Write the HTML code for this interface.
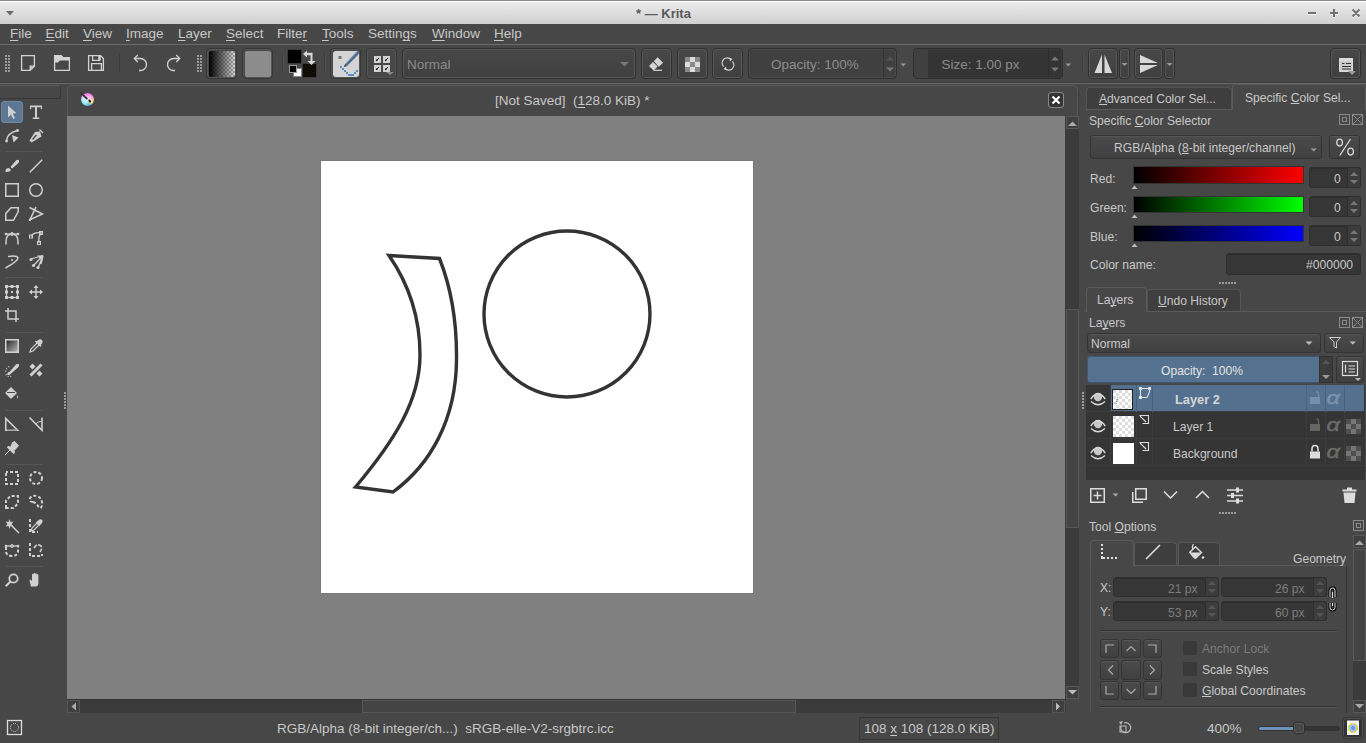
<!DOCTYPE html>
<html><head><meta charset="utf-8"><style>
html,body{margin:0;padding:0}
body{width:1366px;height:743px;overflow:hidden;background:#474747;font-family:"Liberation Sans",sans-serif;font-size:13.5px;color:#c8c8c8;position:relative}
.a{position:absolute}
.t{position:absolute;white-space:pre;line-height:1}
.u{text-decoration:underline;text-underline-offset:2px;text-decoration-skip-ink:none}
svg{position:absolute;overflow:visible}
.tb{position:absolute;box-sizing:border-box;border:1px solid #363636;border-radius:4px;background:#474747;box-shadow:inset 0 0 0 1px #555}
.bt{position:absolute;box-sizing:border-box;border:1px solid #303030;border-radius:4px;background:linear-gradient(#484848,#3f3f3f);box-shadow:inset 0 0 0 1px #575757}
.sep{position:absolute;width:1px;background:#3c3c3c;box-shadow:1px 0 0 #505050}
</style></head><body>
<style>
.d{font-size:12.1px}
.d .u{text-underline-offset:1px}
.tab{position:absolute;box-sizing:border-box;border:1px solid #555;border-bottom:none;border-radius:4px 4px 0 0;background:#3e3e3e}
.taba{position:absolute;box-sizing:border-box;border:1px solid #5a5a5a;border-bottom:none;border-radius:4px 4px 0 0;background:#474747}
.fld{position:absolute;box-sizing:border-box;border:1px solid #2e2e2e;border-radius:3px;background:#363636;box-shadow:inset 0 1px 0 #2c2c2c}
.cb{position:absolute;box-sizing:border-box;border:1px solid #333;border-radius:3px;background:linear-gradient(#4a4a4a,#404040);box-shadow:inset 0 1px 0 #555}
</style>
<!-- TITLE BAR -->
<div class="a" style="left:0;top:0;width:1366px;height:24px;background:linear-gradient(#ececec,#d0d0d0);box-sizing:border-box;border-top:1px solid #8a8a8a"></div>
<div class="a" style="left:0;top:1px;width:1366px;height:1px;background:#fafafa"></div>
<svg style="left:6px;top:11px" width="9" height="6"><path d="M0 0H8L4 4.5Z" fill="#6a6a6a"/></svg>
<div class="t" style="left:636px;top:7px;font-size:13px;font-weight:bold;color:#5a5a5a">* — Krita</div>
<svg style="left:0;top:0" width="1366" height="24">
 <g stroke="#fff" stroke-width="2" opacity="0.8" transform="translate(0,1)"><path d="M1308 13H1316M1330 13H1338M1334 9V17M1352.5 9.5L1359.5 16.5M1359.5 9.5L1352.5 16.5"/></g>
 <g stroke="#707070" stroke-width="2"><path d="M1308 13H1316M1330 13H1338M1334 9V17M1352.5 9.5L1359.5 16.5M1359.5 9.5L1352.5 16.5"/></g>
</svg>
<!-- MENU BAR -->
<div class="a" style="left:0;top:44px;width:1366px;height:1px;background:#6c6c6c"></div>
<div class="t" style="left:10px;top:27px"><span class=u>F</span>ile</div>
<div class="t" style="left:45.5px;top:27px"><span class=u>E</span>dit</div>
<div class="t" style="left:83px;top:27px"><span class=u>V</span>iew</div>
<div class="t" style="left:126px;top:27px"><span class=u>I</span>mage</div>
<div class="t" style="left:178px;top:27px"><span class=u>L</span>ayer</div>
<div class="t" style="left:226px;top:27px"><span class=u>S</span>elect</div>
<div class="t" style="left:277px;top:27px">Filte<span class=u>r</span></div>
<div class="t" style="left:322px;top:27px"><span class=u>T</span>ools</div>
<div class="t" style="left:368px;top:27px">Settin<span class=u>g</span>s</div>
<div class="t" style="left:432px;top:27px"><span class=u>W</span>indow</div>
<div class="t" style="left:494px;top:27px"><span class=u>H</span>elp</div>

<!-- TOOLBAR -->
<div class="a" style="left:0;top:82px;width:1366px;height:1px;background:#3d3d3d"></div>
<div class="a" style="left:0;top:83px;width:1366px;height:1px;background:#6a6a6a"></div>
<!-- buttons frames -->
<div class="tb" style="left:206px;top:48px;width:31px;height:31px"></div>
<div class="a" style="left:209px;top:51px;width:26px;height:26px;border-radius:2px;background:linear-gradient(90deg,#000 0%,rgba(0,0,0,0) 100%),repeating-conic-gradient(#d8d8d8 0 25%,#9a9a9a 0 50%) 0 0/4px 4px"></div>
<div class="tb" style="left:242px;top:48px;width:31px;height:31px"></div>
<div class="a" style="left:245px;top:51px;width:26px;height:26px;border-radius:2px;background:#8c8c8c"></div>
<div class="sep" style="left:282px;top:54px;height:19px"></div>
<div class="a" style="left:288px;top:50px;width:13px;height:13px;background:#000;box-shadow:0 0 0 1px #3a3a3a"></div>
<div class="a" style="left:303px;top:64px;width:13px;height:13px;background:#0e0c05;box-shadow:0 0 0 1px #3a3a3a"></div>
<div class="a" style="left:294px;top:69px;width:7px;height:7px;background:#fff;box-shadow:0 0 0 1px #888"></div>
<div class="a" style="left:290px;top:66px;width:6px;height:6px;background:#000;box-shadow:0 0 0 1px #999"></div>
<div class="sep" style="left:324px;top:54px;height:19px"></div>
<div class="tb" style="left:330px;top:48px;width:31px;height:31px"></div>
<div class="a" style="left:333px;top:51px;width:26px;height:26px;border-radius:3px;background:#d4d4d4"></div>
<div class="tb" style="left:366px;top:48px;width:31px;height:31px"></div>
<!-- blend mode combo -->
<div class="bt" style="left:402px;top:48px;width:234px;height:31px;border-radius:4px"></div>
<div class="t" style="left:407px;top:57.5px;color:#8a8a8a;font-size:13.5px">Normal</div>
<svg style="left:620px;top:62px" width="10" height="6"><path d="M0 0H9L4.5 4.5Z" fill="#777"/></svg>
<div class="bt" style="left:641px;top:48px;width:31px;height:31px;border-radius:4px"></div>
<div class="bt" style="left:677px;top:48px;width:31px;height:31px;border-radius:4px"></div>
<div class="bt" style="left:712px;top:48px;width:31px;height:31px;border-radius:4px"></div>
<!-- opacity slider -->
<div class="a" style="left:748px;top:48px;width:149px;height:31px;box-sizing:border-box;border:1px solid #2f2f2f;border-radius:4px;background:#404040;box-shadow:inset 0 0 0 1px #4a4a4a"></div>
<div class="a" style="left:883px;top:49px;width:1px;height:29px;background:#333"></div>
<div class="t" style="left:771px;top:57.5px;color:#8c8c8c;font-size:13.5px">Opacity: 100%</div>
<svg style="left:0;top:0" width="1366" height="90">
 <path d="M886 60.5L890 56.5L894 60.5Z" fill="#555"/><path d="M886 67.5L890 71.5L894 67.5Z" fill="#777"/>
 <path d="M900.5 63.5H906L903.25 66.5Z" fill="#999"/>
</svg>
<!-- size slider -->
<div class="a" style="left:913px;top:48px;width:150px;height:31px;box-sizing:border-box;border:1px solid #2f2f2f;border-radius:4px;background:#343434;box-shadow:inset 0 0 0 1px #3a3a3a"></div>
<div class="a" style="left:914px;top:49px;width:14px;height:29px;background:#404040;border-radius:3px 0 0 3px"></div>
<div class="a" style="left:1048px;top:49px;width:1px;height:29px;background:#2c2c2c"></div>
<div class="t" style="left:941.5px;top:57.5px;color:#8c8c8c;font-size:13.5px">Size: 1.00 px</div>
<svg style="left:0;top:0" width="1366" height="90">
 <path d="M1051 60.5L1055 56.5L1059 60.5Z" fill="#777"/><path d="M1051 67.5L1055 71.5L1059 67.5Z" fill="#777"/>
 <path d="M1065.5 63.5H1071L1068.25 66.5Z" fill="#999"/>
</svg>
<div class="sep" style="left:1082px;top:54px;height:19px"></div>
<div class="bt" style="left:1088px;top:48px;width:30px;height:31px;border-radius:4px"></div>
<div class="bt" style="left:1119px;top:48px;width:11px;height:31px;border-radius:3px"></div>
<div class="bt" style="left:1134px;top:48px;width:29px;height:31px;border-radius:4px"></div>
<div class="bt" style="left:1164px;top:48px;width:11px;height:31px;border-radius:3px"></div>
<div class="bt" style="left:1330px;top:48px;width:31px;height:31px;border-radius:4px"></div>

<svg style="left:0;top:0" width="1366" height="90">
<g fill="#9a9a9a">
 <rect x="5" y="55" width="2" height="2"/><rect x="8" y="55" width="2" height="2"/>
 <rect x="5" y="58" width="2" height="2"/><rect x="8" y="58" width="2" height="2"/>
 <rect x="5" y="61" width="2" height="2"/><rect x="8" y="61" width="2" height="2"/>
 <rect x="5" y="64" width="2" height="2"/><rect x="8" y="64" width="2" height="2"/>
 <rect x="5" y="67" width="2" height="2"/><rect x="8" y="67" width="2" height="2"/>
 <rect x="5" y="70" width="2" height="2"/><rect x="8" y="70" width="2" height="2"/>
 <rect x="197" y="55" width="2" height="2"/><rect x="200" y="55" width="2" height="2"/>
 <rect x="197" y="58" width="2" height="2"/><rect x="200" y="58" width="2" height="2"/>
 <rect x="197" y="61" width="2" height="2"/><rect x="200" y="61" width="2" height="2"/>
 <rect x="197" y="64" width="2" height="2"/><rect x="200" y="64" width="2" height="2"/>
 <rect x="197" y="67" width="2" height="2"/><rect x="200" y="67" width="2" height="2"/>
 <rect x="197" y="70" width="2" height="2"/><rect x="200" y="70" width="2" height="2"/>
</g>
<g fill="none" stroke="#d2d2d2" stroke-width="1.3">
 <!-- new -->
 <path d="M21.6 55.6H34.4V66.2L30.2 70.4H21.6Z"/>
 <path d="M30.2 70.4V66.2H34.4" fill="#bdbdbd"/>
 <!-- open -->
 <path d="M54.6 55.6H61L63 57.6H69.4V70.4H54.6Z"/>
 <!-- save -->
 <path d="M88.6 55.6H100.6L103.4 58.6V70.4H88.6Z"/>
 <path d="M92.6 55.6V60.4H99.4V55.6"/>
 <path d="M91.6 70.4V63.6H101.4V70.4"/>
 <!-- undo / redo -->
 <path d="M134.5 58.5H140.5A5.6 5.6 0 0 1 140.5 70.5H139"/>
 <path d="M137.8 55L134.3 58.5L137.8 62"/>
 <path d="M179.5 58.5H173.5A5.6 5.6 0 0 0 173.5 70.5H175"/>
 <path d="M176.2 55L179.7 58.5L176.2 62"/>
</g>
<path d="M54 55H61L63 57H70V60.5H60L58 62.5H54Z" fill="#d2d2d2"/>
<path d="M99.5 55.6V60.4" stroke="#d2d2d2" stroke-width="2.5"/>
<!-- separator -->
<rect x="119" y="54" width="1" height="19" fill="#3c3c3c"/>
<!-- swap arrows -->
<g fill="#d8d8d8">
 <path d="M303 54L307 50.5V52.8H312.5V61H315.5L311.5 65L307.5 61H310.5V55.2H307V57.5Z"/>
</g>
<!-- brush preset icon -->
<rect x="338.5" y="56" width="3" height="3" fill="#777"/>
<path d="M344.8 64.5L355.5 52.8Q357.8 50.5 358.9 51.5Q359.9 52.6 357.9 55L346.8 66.2Z" fill="#4a6a90"/>
<path d="M345.8 63.8L356.8 52.3" stroke="#8aa8c8" stroke-width="0.8"/>
<path d="M344 67L344.8 64.5L346.8 66.2Z" fill="#333"/>
<g fill="#5a90c8">
 <rect x="340" y="66" width="2" height="2"/><rect x="342" y="68" width="2" height="2"/><rect x="344" y="70" width="2" height="2"/><rect x="346" y="72" width="2" height="2"/>
 <rect x="348" y="74" width="6" height="2"/><rect x="354" y="72" width="2" height="2"/><rect x="356" y="70" width="2" height="2"/>
</g>
<!-- grid icon -->
<g fill="#d0d0d0">
 <rect x="374" y="56" width="7" height="7"/><rect x="383" y="56" width="7" height="7"/>
 <rect x="374" y="65" width="7" height="7"/><rect x="383" y="65" width="7" height="7"/>
</g>
<g fill="#111"><path d="M376 61V59L378 61Z"/><path d="M376.8 60.2L379 58" stroke="#111" stroke-width="1"/><path d="M385 61V59L387 61Z"/><path d="M385.8 60.2L388 58" stroke="#111" stroke-width="1"/><path d="M376 70V68L378 70Z"/><path d="M376.8 69.2L379 67" stroke="#111" stroke-width="1"/><path d="M385 70V68L387 70Z"/><path d="M385.8 69.2L388 67" stroke="#111" stroke-width="1"/></g>
<path d="M386 72H394L390 75Z" fill="#888"/>
<!-- eraser -->
<path d="M653.8 61.2L657.6 57.3L663 62.7L658.8 66.8Z" fill="#d4d4d4"/>
<path d="M649 66L653 62L657.6 66.6L653.6 70.4Z" fill="#d4d4d4"/>
<path d="M653.5 70.3H662" stroke="#d4d4d4" stroke-width="1.2"/>
<!-- alpha lock checker -->
<rect x="685" y="57" width="15" height="15" fill="#dcdcdc"/>
<g fill="#8a8a8a"><rect x="685" y="57" width="5" height="5"/><rect x="695" y="57" width="5" height="5"/><rect x="690" y="62" width="5" height="5"/><rect x="685" y="67" width="5" height="5"/><rect x="695" y="67" width="5" height="5"/></g>
<!-- reload -->
<g fill="none" stroke="#cfcfcf" stroke-width="1.1">
 <path d="M723.5 66.5A4.8 4.8 0 0 1 731 59.5"/>
 <path d="M732.5 61.5A4.8 4.8 0 0 1 725 68.5"/>
</g>
<path d="M729.5 57.5L732.5 59L730 61.5Z M726.5 70.5L723.5 69L726 66.5Z" fill="#cfcfcf"/>
<!-- mirror H -->
<path d="M1102 54.5V73H1094.5Z M1104.5 54.5V73H1112Z" fill="#d8d8d8"/>
<path d="M1121.5 63H1127.5L1124.5 66Z" fill="#999"/>
<!-- mirror V -->
<path d="M1140 55L1158 63H1140Z M1140 65H1158L1140 73Z" fill="#d8d8d8"/>
<path d="M1166.5 63H1172.5L1169.5 66Z" fill="#999"/>
<!-- right icon -->
<path d="M1339.5 58.5H1352.5V71.5H1339.5Z" fill="#ccc" stroke="#ddd" stroke-width="1"/>
<path d="M1339.5 58.5H1352.5V61H1339.5Z" fill="#ddd"/>
<path d="M1342 63.5H1344.5M1346 63.5H1351M1342 66.5H1351M1342 69H1351" stroke="#333" stroke-width="1.2"/>
<path d="M1348 71H1356L1352 75Z" fill="#999"/>
</svg>

<!-- TOOLBOX -->
<div class="a" style="left:0;top:85px;width:61px;height:14px;box-sizing:border-box;border:1px solid #353535;border-top-color:#5a5a5a;border-left:none;background:#474747"></div>
<div class="a" style="left:1px;top:101px;width:22px;height:22px;box-sizing:border-box;border-radius:3px;background:#5c7894;border:1px solid #6a8aa8"></div>
<svg style="left:0;top:0" width="70" height="600">
<rect x="6" y="151" width="37" height="1" fill="#555"/>
<rect x="6" y="277" width="37" height="1" fill="#555"/>
<rect x="6" y="332" width="37" height="1" fill="#555"/>
<rect x="6" y="410" width="37" height="1" fill="#555"/>
<rect x="6" y="464" width="37" height="1" fill="#555"/>
<rect x="6" y="566" width="37" height="1" fill="#555"/>
<g transform="translate(5,105)"><path d="M3 0.5L11.5 8.2L7.7 8.6L10 13L8.2 14L6 9.6L3 12.5Z" fill="#d0d0d0"/></g>
<g transform="translate(29,105)"><path d="M1 0.5H13V4.2H11.9V2.2H8V12.6H10.3V14H3.7V12.6H6V2.2H2.1V4.2H1Z" fill="#d0d0d0"/></g>
<g transform="translate(5,129)"><path d="M1.5 12Q2 4 12.5 1.5" stroke="#d0d0d0" fill="none" stroke-width="1.5"/><circle cx="1.6" cy="12" r="1.4" fill="#d0d0d0"/><circle cx="12.5" cy="1.5" r="1.4" fill="#d0d0d0"/><path d="M7 6L13.5 8.5L8.5 13.5Z" fill="#d0d0d0"/></g>
<g transform="translate(29,129)"><path d="M0.5 11.5L6 3L11 2.5L12.5 7.5L2.5 13.5Z" fill="#d0d0d0"/><path d="M3.5 10.5L7.5 6" stroke="#474747" stroke-width="1.3"/><path d="M10.5 0.5L14 4" stroke="#d0d0d0" stroke-width="1.2"/></g>
<g transform="translate(5,159)"><path d="M0.5 13Q0 9 4 9L6 11Q5 13.5 0.5 13Z" fill="#d0d0d0"/><path d="M5 8.5L11 1.5Q13 0 14 1.5Q14.5 3 13 4.5L6.5 10Z" fill="#d0d0d0"/><path d="M4.5 7.5L7 10" stroke="#474747" stroke-width="1"/></g>
<g transform="translate(29,159)"><path d="M0.8 13.2L13.2 0.8" stroke="#d0d0d0" fill="none" stroke-width="1.5"/></g>
<g transform="translate(5,183)"><rect x="0.75" y="0.75" width="12.5" height="12.5" stroke="#d0d0d0" fill="none" stroke-width="1.5"/></g>
<g transform="translate(29,183)"><circle cx="7" cy="7" r="6.25" stroke="#d0d0d0" fill="none" stroke-width="1.5"/></g>
<g transform="translate(5,207)"><path d="M0.75 6.5L6 0.75H13.25V4.5L8.5 13.25H0.75Z" stroke="#d0d0d0" fill="none" stroke-width="1.5"/></g>
<g transform="translate(29,207)"><path d="M0.5 0.5L13.5 7L1 12.8L7 0" stroke="#d0d0d0" fill="none" stroke-width="1.5"/><circle cx="1" cy="12.8" r="1.2" fill="#d0d0d0"/></g>
<g transform="translate(5,231)"><path d="M1 13.5V11Q1 3 7 3Q13 3 13 11V13.5" stroke="#d0d0d0" fill="none" stroke-width="1.5"/><path d="M0.5 3H13.5" stroke="#d0d0d0" fill="none" stroke-width="1.2"/><circle cx="1" cy="3" r="1.3" fill="#d0d0d0"/><circle cx="13" cy="3" r="1.3" fill="#d0d0d0"/><circle cx="7" cy="3" r="1.5" stroke="#d0d0d0" fill="none" stroke-width="1"/></g>
<g transform="translate(29,231)"><path d="M2 5.5Q5 0.5 12 2Q9 6 10 12" stroke="#d0d0d0" fill="none" stroke-width="1.3"/><rect x="0.5" y="4" width="3" height="3" stroke="#d0d0d0" fill="none"/><rect x="10.5" y="0.5" width="3" height="3" stroke="#d0d0d0" fill="none"/><rect x="8.5" y="10.5" width="3" height="3" stroke="#d0d0d0" fill="none"/></g>
<g transform="translate(5,255)"><path d="M3 1.5Q12 0 13 3Q13 6 0.5 13" stroke="#d0d0d0" fill="none" stroke-width="1.5"/><circle cx="7" cy="5" r="1" fill="#d0d0d0"/></g>
<g transform="translate(29,255)"><path d="M14 0.5L2 4M14 0.5L5 10M14 0.5L9 13M14 0.5L12 9" stroke="#d0d0d0" fill="none" stroke-width="1.3"/><circle cx="2" cy="4.5" r="1.6" fill="#d0d0d0"/><circle cx="4.5" cy="10.5" r="1.6" fill="#d0d0d0"/><circle cx="9" cy="12.5" r="1.6" fill="#d0d0d0"/><path d="M8 0.5L14 0.5L13.5 6Z" fill="#d0d0d0"/></g>
<g transform="translate(5,285)"><rect x="1.5" y="1.5" width="11" height="11" stroke="#d0d0d0" fill="none" stroke-width="1.2"/><g fill="#d0d0d0"><rect x="0" y="0" width="3" height="3"/><rect x="11" y="0" width="3" height="3"/><rect x="0" y="11" width="3" height="3"/><rect x="11" y="11" width="3" height="3"/><rect x="5.5" y="0" width="3" height="3"/><rect x="5.5" y="11" width="3" height="3"/><rect x="0" y="5.5" width="3" height="3"/><rect x="11" y="5.5" width="3" height="3"/><rect x="6" y="6" width="2" height="2"/></g></g>
<g transform="translate(29,285)"><path d="M7 1V13M1 7H13" stroke="#d0d0d0" fill="none" stroke-width="1.4"/><path d="M7 0L9.5 3H4.5ZM7 14L9.5 11H4.5ZM0 7L3 4.5V9.5ZM14 7L11 4.5V9.5Z" fill="#d0d0d0"/></g>
<g transform="translate(5,308)"><path d="M3 0V11H14M0 3H11V14" stroke="#d0d0d0" fill="none" stroke-width="1.5"/></g>
<g transform="translate(5,339)"><defs><linearGradient id="gg" x1="0" y1="0" x2="1" y2="1"><stop offset="0" stop-color="#222"/><stop offset="1" stop-color="#bbb"/></linearGradient></defs><rect x="0.75" y="0.75" width="12.5" height="12.5" fill="url(#gg)" stroke="#d0d0d0" stroke-width="1.5"/></g>
<g transform="translate(29,339)"><path d="M1 13L2 10L8.5 3.5L10.5 5.5L4 12Z" stroke="#d0d0d0" fill="none" stroke-width="1.2"/><path d="M7 3L9.5 0.8Q11.5 -0.5 13 1Q14.5 2.5 13 4.5L11 7Z" fill="#d0d0d0"/><path d="M6.5 2L12 7.5" stroke="#d0d0d0" fill="none" stroke-width="1.6"/></g>
<g transform="translate(5,363)"><path d="M4 9.5L11 1.5Q13 0 14 1.5Q14.5 3 13 4.5L5.5 11Z" fill="#d0d0d0"/><path d="M2 11.5Q3 7.5 6 10Q5 13 2 11.5Z" fill="#d0d0d0"/><g stroke="#d0d0d0" stroke-width="0.9"><path d="M0 8H1.5M1 5L2.3 6M3.5 3L4 4.5M0.5 12L2 11.5M3 14L3.5 12.8M6 14L5.5 12.8"/></g></g>
<g transform="translate(29,363)"><path d="M11.5 0.5L13.5 2.5L2.5 13.5L0.5 11.5Z" fill="#d0d0d0"/><path d="M3.5 0.5L6.5 3.5L3.5 6.5L0.5 3.5ZM10.5 7.5L13.5 10.5L10.5 13.5L7.5 10.5Z" fill="#d0d0d0"/></g>
<g transform="translate(5,386)"><path d="M0.5 6.5L6 1L12 7L7 12Q6 13 5 12L1 8Q0 7 0.5 6.5Z" fill="#d0d0d0"/><path d="M2 6.5H10" stroke="#474747" stroke-width="1"/><path d="M12.5 9Q14 11.5 12.8 13Q11.5 11.5 12.5 9Z" fill="#d0d0d0"/></g>
<g transform="translate(5,417)"><path d="M0.75 1.5V13.25H12.5Z" stroke="#d0d0d0" fill="none" stroke-width="1.6"/><path d="M3 13.8V12.5M5 13.8V12.5M7 13.8V12.5M9 13.8V12.5M11 13.8V12.5" stroke="#474747" stroke-width="0.7"/></g>
<g transform="translate(29,417)"><path d="M0.5 0.5L13 13.2V0.5" stroke="#d0d0d0" fill="none" stroke-width="1.6"/><path d="M7 7Q8 4.5 12 4.5" stroke="#d0d0d0" fill="none" stroke-width="1"/></g>
<g transform="translate(5,441)"><path d="M7 1.5L9.5 0L14 4.5L12 7L9.5 9.5L10 12L8.5 13L1.8 6.2L3 5L5.5 5.5Z" fill="#d0d0d0"/><path d="M0 14L5 9" stroke="#d0d0d0" fill="none" stroke-width="1"/></g>
<g transform="translate(5,471)"><rect x="1" y="1" width="12" height="12" stroke="#d0d0d0" fill="none" stroke-width="2" stroke-dasharray="3 2" stroke-dashoffset="1"/></g>
<g transform="translate(29,471)"><circle cx="7" cy="7" r="6" stroke="#d0d0d0" fill="none" stroke-width="2" stroke-dasharray="3 2"/></g>
<g transform="translate(5,495)"><path d="M1 13V5.5L5.5 1H13V8.5L8.5 13Z" stroke="#d0d0d0" fill="none" stroke-width="2" stroke-dasharray="3 2"/></g>
<g transform="translate(29,495)"><path d="M4 7Q0 7 1 3Q3 0 8 1Q13 3 13 8Q13 12 11.5 13.5M4 7Q8 8 10 13" stroke="#d0d0d0" fill="none" stroke-width="2" stroke-dasharray="3 2"/></g>
<g transform="translate(5,519)"><path d="M5 5L14 14" stroke="#d0d0d0" fill="none" stroke-width="1.5"/><path d="M4.5 0L5.5 3L8.5 2.5L6.5 5L8.5 7.5L5.5 7L4.5 10L3.5 7L0.5 7.5L2.5 5L0.5 2.5L3.5 3Z" fill="#d0d0d0"/></g>
<g transform="translate(29,519)"><path d="M1 5V13H9M1 3V1H4" stroke="#d0d0d0" fill="none" stroke-width="2" stroke-dasharray="3 2"/><path d="M2 12L3 9L8 4L10 6L5 11Z" stroke="#d0d0d0" fill="none" stroke-width="1.2"/><path d="M7 3.5L10 0.8Q12 -0.2 13.2 1Q14.2 2.2 13 4L10.5 7Z" fill="#d0d0d0"/></g>
<g transform="translate(5,543)"><path d="M1 4V9Q2 13 7 13Q12 13 13 9V4" stroke="#d0d0d0" fill="none" stroke-width="2" stroke-dasharray="3 2"/><path d="M0.5 3H13.5" stroke="#d0d0d0" fill="none" stroke-width="1.3"/><circle cx="1" cy="3" r="1.3" fill="#d0d0d0"/><circle cx="13" cy="3" r="1.3" fill="#d0d0d0"/><circle cx="7" cy="3" r="1.5" stroke="#d0d0d0" fill="none" stroke-width="1"/></g>
<g transform="translate(29,543)"><path d="M1 5V13H13V11M1 3V1H4" stroke="#d0d0d0" fill="none" stroke-width="2" stroke-dasharray="3 2"/><path d="M5 5Q8 0 12 3Q14 6 10 10" stroke="#d0d0d0" fill="none" stroke-width="1.6" stroke-dasharray="4 1.5"/></g>
<g transform="translate(5,573)"><circle cx="8.5" cy="5.5" r="4.2" stroke="#d0d0d0" fill="none" stroke-width="1.8"/><path d="M5.5 8.5L0.7 13.3" stroke="#d0d0d0" fill="none" stroke-width="2"/></g>
<g transform="translate(29,573)"><path d="M2 13.5L0.5 7.5Q0.5 6.5 1.5 6.5L3 8V1.5Q3 0.8 3.8 0.8Q4.6 0.8 4.6 1.5V6V0.7Q4.6 0 5.4 0Q6.2 0 6.2 0.7V6V0.9Q6.2 0.2 7 0.2Q7.8 0.2 7.8 0.9V6V2Q7.8 1.3 8.6 1.3Q9.4 1.3 9.4 2V10Q9.4 13.5 6.5 13.5Z" fill="#d0d0d0"/></g>
<rect x="64" y="392" width="2" height="2" fill="#9a9a9a"/>
<rect x="64" y="395" width="2" height="2" fill="#9a9a9a"/>
<rect x="64" y="398" width="2" height="2" fill="#9a9a9a"/>
<rect x="64" y="401" width="2" height="2" fill="#9a9a9a"/>
<rect x="64" y="404" width="2" height="2" fill="#9a9a9a"/>
<rect x="64" y="407" width="2" height="2" fill="#9a9a9a"/>
</svg>
<!-- CANVAS SUBWINDOW -->
<div class="a" style="left:67px;top:85px;width:1011px;height:40px;box-sizing:border-box;border:1px solid #5a5a5a;border-bottom:none;border-radius:5px 5px 0 0;background:#474747"></div>
<div class="a" style="left:67px;top:116px;width:998px;height:583px;background:#808080"></div>
<div class="a" style="left:320px;top:160px;width:434px;height:434px;background:#7a7a7a"></div>
<div class="a" style="left:321px;top:161px;width:432px;height:432px;background:#fff"></div>
<!-- v scrollbar -->
<div class="a" style="left:1065px;top:116px;width:14px;height:583px;background:#3b3b3b"></div>
<div class="a" style="left:1078px;top:90px;width:1px;height:26px;background:#3a3a3a"></div>
<div class="a" style="left:1066px;top:116px;width:13px;height:13px;box-sizing:border-box;border:1px solid #575757;background:#3f3f3f"></div>
<div class="a" style="left:1066px;top:686px;width:13px;height:13px;box-sizing:border-box;border:1px solid #575757;background:#3f3f3f"></div>
<div class="a" style="left:1066px;top:309px;width:13px;height:219px;box-sizing:border-box;border:1px solid #575757;background:#444"></div>
<!-- h scrollbar -->
<div class="a" style="left:67px;top:699px;width:999px;height:14px;background:#3b3b3b;border-top:1px solid #333;box-sizing:border-box"></div>
<div class="a" style="left:67px;top:700px;width:13px;height:13px;box-sizing:border-box;border:1px solid #575757;background:#3f3f3f"></div>
<div class="a" style="left:1052px;top:700px;width:13px;height:13px;box-sizing:border-box;border:1px solid #575757;background:#3f3f3f"></div>
<div class="a" style="left:362px;top:700px;width:434px;height:13px;box-sizing:border-box;border:1px solid #575757;background:#444"></div>
<div class="a" style="left:1066px;top:699px;width:13px;height:14px;background:#474747"></div>
<!-- close btn -->
<div class="a" style="left:1048px;top:92px;width:16px;height:16px;box-sizing:border-box;border:1px solid #888;border-radius:3px;background:radial-gradient(#2a2a2a,#3a3a3a)"></div>
<div class="a" style="left:80.5px;top:92.5px;width:13px;height:13px;border-radius:50%;background:radial-gradient(circle at 45% 50%,#eef 0,rgba(255,255,255,0.6) 30%,rgba(255,255,255,0) 75%),conic-gradient(#ff50f0,#ffa0c0 80deg,#f0f050 125deg,#5090e0 160deg,#40f0f0 230deg,#c0c0ff 290deg,#ff40f0 340deg)"></div>
<div class="t" style="left:495px;top:94px">[Not Saved]  (<span class=u>1</span>28.0 KiB) *</div>
<svg style="left:0;top:0" width="1366" height="743">
 <path d="M1052.5 96.5L1059.5 103.5M1059.5 96.5L1052.5 103.5" stroke="#fff" stroke-width="2.2"/>
 <path d="M1068 126H1077L1072.5 121.5Z" fill="#aaa"/>
 <path d="M1068 690H1077L1072.5 694.5Z" fill="#bbb"/>
 <path d="M76 702.5V710.5L71.5 706.5Z" fill="#aaa"/>
 <path d="M1056 702.5V710.5L1060 706.5Z" fill="#bbb"/>
 <defs>
  <radialGradient id="kw" cx="0.5" cy="0.5" r="0.5"><stop offset="0" stop-color="#fff"/><stop offset="0.55" stop-color="#fff" stop-opacity="0.6"/><stop offset="1" stop-color="#fff" stop-opacity="0"/></radialGradient>
 </defs>
 <path d="M80 93.2L81 92.3L88 98.3L86.6 99.8Z" fill="#333"/>
 <ellipse cx="89.7" cy="101" rx="1.1" ry="1.7" transform="rotate(-30 89.7 101)" fill="#1a1a1a"/>
 <!-- drawing -->
 <g fill="none" stroke="#333" stroke-width="3.4" stroke-linejoin="miter">
  <path d="M389 255.5L439.5 258.5C450 285 457 320 456.5 360C456 420 430 465 393 492L355.5 487C395 440 420 400 420 355C420 315 408 283 389 255.5Z"/>
  <circle cx="567" cy="314" r="83"/>
 </g>
</svg>

<!-- DOCKERS -->
<div class="a" style="left:1082px;top:392px;width:2px;height:17px;background:repeating-linear-gradient(#9a9a9a 0 2px,transparent 2px 3px)"></div>
<!-- color selector tabs -->
<div class="a" style="left:1085px;top:109px;width:281px;height:1px;background:#5a5a5a"></div>
<div class="tab" style="left:1086px;top:87px;width:146px;height:22px"></div>
<div class="taba" style="left:1232px;top:84px;width:134px;height:26px"></div>
<div class="a" style="left:1233px;top:109px;width:132px;height:1px;background:#474747"></div>
<div class="t d" style="left:1099px;top:92.5px"><span class=u>A</span>dvanced Color Sel...</div>
<div class="t d" style="left:1245px;top:91.5px">Specific <span class=u>C</span>olor Sel...</div>
<div class="t d" style="left:1089px;top:114.5px">Specific <span class=u>C</span>olor Selector</div>
<!-- combo -->
<div class="cb" style="left:1090px;top:135px;width:232px;height:24px"></div>
<div class="t d" style="left:1114px;top:141.5px">RGB/Alpha (<span class=u>8</span>-bit integer/channel)</div>
<div class="cb" style="left:1329px;top:135px;width:31px;height:24px"></div>

<!-- RGB rows -->
<div class="t d" style="left:1090px;top:172.5px">Red:</div>
<div class="t d" style="left:1090px;top:201.5px">Green:</div>
<div class="t d" style="left:1090px;top:230.5px">Blue:</div>
<div class="t d" style="left:1090px;top:258.5px">Color name:</div>
<div class="a" style="left:1133px;top:166px;width:171px;height:18px;box-sizing:border-box;border:1px solid #333;background:linear-gradient(90deg,#000,#f00)"></div>
<div class="a" style="left:1133px;top:196px;width:171px;height:17px;box-sizing:border-box;border:1px solid #333;background:linear-gradient(90deg,#000,#0f0)"></div>
<div class="a" style="left:1133px;top:225px;width:171px;height:17px;box-sizing:border-box;border:1px solid #333;background:linear-gradient(90deg,#000,#00f)"></div>
<div class="fld" style="left:1309px;top:167px;width:52px;height:21px"></div>
<div class="fld" style="left:1309px;top:196px;width:52px;height:21px"></div>
<div class="fld" style="left:1309px;top:225px;width:52px;height:21px"></div>
<div class="a" style="left:1347px;top:167px;width:14px;height:21px;box-sizing:border-box;border:1px solid #2e2e2e;border-radius:0 3px 3px 0;background:#3c3c3c"></div>
<div class="a" style="left:1347px;top:196px;width:14px;height:21px;box-sizing:border-box;border:1px solid #2e2e2e;border-radius:0 3px 3px 0;background:#3c3c3c"></div>
<div class="a" style="left:1347px;top:225px;width:14px;height:21px;box-sizing:border-box;border:1px solid #2e2e2e;border-radius:0 3px 3px 0;background:#3c3c3c"></div>
<div class="t d" style="left:1334px;top:172.5px">0</div>
<div class="t d" style="left:1334px;top:201.5px">0</div>
<div class="t d" style="left:1334px;top:230.5px">0</div>
<div class="fld" style="left:1226px;top:253px;width:135px;height:22px"></div>
<div class="t d" style="left:1306px;top:258.5px">#000000</div>
<svg style="left:0;top:0" width="1366" height="743">
 <g fill="#bbb"><path d="M1131.5 189H1137.5L1134.5 185.5Z"/><path d="M1131.5 218H1137.5L1134.5 214.5Z"/><path d="M1131.5 247H1137.5L1134.5 243.5Z"/></g>
 <g fill="#777"><path d="M1350 176L1354 172L1358 176Z M1350 180L1354 184L1358 180Z"/><path d="M1350 205L1354 201L1358 205Z M1350 209L1354 213L1358 209Z"/><path d="M1350 234L1354 230L1358 234Z M1350 238L1354 242L1358 238Z"/></g>
 <path d="M1310.5 148.5H1317L1313.75 151.5Z" fill="#999"/>
 <g fill="none" stroke="#dcdcdc" stroke-width="1.3"><ellipse cx="1339.6" cy="142.6" rx="2.8" ry="3.4"/><ellipse cx="1350.6" cy="151.6" rx="2.8" ry="3.4"/><path d="M1350.5 139L1339.8 155.5"/></g>
 <!-- float / close icons -->
 <g fill="none" stroke="#8a8a8a" stroke-width="1">
  <rect x="1339.5" y="114.5" width="10" height="10"/><rect x="1342.5" y="117.5" width="4" height="4"/>
  <rect x="1352.5" y="114.5" width="10" height="10"/><path d="M1353 115L1362 124M1362 115L1353 124"/>
  <rect x="1339.5" y="317.5" width="10" height="10"/><rect x="1342.5" y="320.5" width="4" height="4"/>
  <rect x="1352.5" y="317.5" width="10" height="10"/><path d="M1353 318L1362 327M1362 318L1353 327"/>
  <rect x="1353.5" y="520.5" width="10" height="10"/><rect x="1356.5" y="523.5" width="4" height="4"/>
 </g>
 <g fill="#9a9a9a"><rect x="1219" y="282" width="2" height="2"/><rect x="1222" y="282" width="2" height="2"/><rect x="1225" y="282" width="2" height="2"/><rect x="1228" y="282" width="2" height="2"/><rect x="1231" y="282" width="2" height="2"/><rect x="1234" y="282" width="2" height="2"/><rect x="1219" y="512" width="2" height="2"/><rect x="1222" y="512" width="2" height="2"/><rect x="1225" y="512" width="2" height="2"/><rect x="1228" y="512" width="2" height="2"/><rect x="1231" y="512" width="2" height="2"/><rect x="1234" y="512" width="2" height="2"/></g>
</svg>

<!-- layers tabs -->
<div class="a" style="left:1085px;top:311px;width:281px;height:1px;background:#5a5a5a"></div>
<div class="taba" style="left:1086px;top:287px;width:61px;height:25px"></div>
<div class="a" style="left:1087px;top:311px;width:59px;height:1px;background:#474747"></div>
<div class="tab" style="left:1147px;top:289px;width:94px;height:22px"></div>
<div class="t d" style="left:1097px;top:293.5px">La<span class=u>y</span>ers</div>
<div class="t d" style="left:1158px;top:294.5px"><span class=u>U</span>ndo History</div>
<div class="t d" style="left:1089px;top:316.5px">La<span class=u>y</span>ers</div>
<div class="cb" style="left:1087px;top:333px;width:234px;height:20px"></div>
<div class="t d" style="left:1091px;top:337.5px">Normal</div>
<div class="cb" style="left:1324px;top:333px;width:40px;height:20px"></div>
<div class="a" style="left:1087px;top:356px;width:233px;height:27px;box-sizing:border-box;border:1px solid #3e5670;border-radius:3px 0 0 3px;background:#54718f"></div>
<div class="a" style="left:1319px;top:356px;width:14px;height:27px;box-sizing:border-box;border:1px solid #333;background:#3c3c3c"></div>
<div class="t d" style="left:1161px;top:364.5px;color:#e4e4e4">Opacity:  100%</div>
<div class="cb" style="left:1336px;top:356px;width:28px;height:27px"></div>
<!-- layer list -->
<div class="a" style="left:1086px;top:385px;width:279px;height:95px;background:#353535"></div>
<div class="a" style="left:1110px;top:385px;width:254px;height:27px;background:#53708f"></div>
<div class="a" style="left:1086px;top:411px;width:279px;height:1px;background:#3c3c3c"></div>
<div class="a" style="left:1086px;top:438px;width:279px;height:1px;background:#3c3c3c"></div>
<div class="a" style="left:1086px;top:465px;width:279px;height:1px;background:#3c3c3c"></div>
<div class="a" style="left:1110px;top:385px;width:1px;height:81px;background:#3c3c3c"></div>
<div class="a" style="left:1136px;top:385px;width:1px;height:81px;background:#3c3c3c"></div>
<div class="a" style="left:1152px;top:385px;width:1px;height:81px;background:#3c3c3c"></div>
<div class="a" style="left:1306px;top:385px;width:1px;height:81px;background:#3c3c3c"></div>
<div class="a" style="left:1325px;top:385px;width:1px;height:81px;background:#3c3c3c"></div>
<div class="a" style="left:1344px;top:385px;width:1px;height:81px;background:#3c3c3c"></div>
<div class="a" style="left:1136px;top:385px;width:1px;height:27px;background:#456280"></div>
<div class="a" style="left:1152px;top:385px;width:1px;height:27px;background:#456280"></div>
<div class="a" style="left:1306px;top:385px;width:1px;height:27px;background:#456280"></div>
<div class="a" style="left:1325px;top:385px;width:1px;height:27px;background:#456280"></div>
<div class="a" style="left:1344px;top:385px;width:1px;height:27px;background:#456280"></div>
<div class="a" style="left:1112px;top:389px;width:21px;height:21px;box-sizing:border-box;border:1px solid #222;background:repeating-conic-gradient(#fff 0 25%,#ddd 0 50%) 0 0/6px 6px"></div>
<div class="a" style="left:1113px;top:416px;width:21px;height:21px;background:repeating-conic-gradient(#fff 0 25%,#ddd 0 50%) 0 0/6px 6px"></div>
<div class="a" style="left:1113px;top:443px;width:21px;height:21px;background:#fff"></div>
<div class="t d" style="left:1175px;top:394px;font-weight:bold;font-size:12.8px;color:#d6d6d6">Layer 2</div>
<div class="t d" style="left:1173px;top:421px">Layer 1</div>
<div class="t d" style="left:1173px;top:448px">Background</div>
<svg style="left:0;top:0" width="1366" height="743">
 <!-- combo arrows -->
 <path d="M1305.5 341.5H1312.5L1309 345Z" fill="#bbb"/>
 <path d="M1329.5 337.5H1340.5L1336.5 342V348L1334 346.5V342Z" fill="none" stroke="#ccc" stroke-width="1"/>
 <path d="M1349.5 341.5H1356L1352.75 344.5Z" fill="#bbb"/>
 <path d="M1322 364L1326 360L1330 364Z" fill="#555"/><path d="M1322 375L1326 379L1330 375Z" fill="#999"/>
 <rect x="1342.5" y="361.5" width="15" height="14" fill="none" stroke="#ddd" stroke-width="1.2"/>
 <path d="M1345.5 364.5V372.5M1348.5 366H1355M1348.5 369H1355M1348.5 372H1355" stroke="#ddd" stroke-width="1.2"/>
 <path d="M1355 378H1361L1358 381Z" fill="#bbb"/>
 <!-- thumbnail dots layer2 -->
 <path d="M1116 404L1118 396" stroke="#444" stroke-width="0.8" stroke-dasharray="1 1"/>
 <!-- eyes -->
 <g><circle cx="1098" cy="397" r="4.2" fill="#c8c8c8"/><path d="M1090.8 399Q1098 388.5 1105.2 399" fill="none" stroke="#d8d8d8" stroke-width="1.4"/><path d="M1091 401.5Q1098 408 1105 401.5" fill="none" stroke="#d8d8d8" stroke-width="1.3"/><circle cx="1098" cy="424" r="4.2" fill="#c8c8c8"/><path d="M1090.8 426Q1098 415.5 1105.2 426" fill="none" stroke="#d8d8d8" stroke-width="1.4"/><path d="M1091 428.5Q1098 435 1105 428.5" fill="none" stroke="#d8d8d8" stroke-width="1.3"/><circle cx="1098" cy="451" r="4.2" fill="#c8c8c8"/><path d="M1090.8 453Q1098 442.5 1105.2 453" fill="none" stroke="#d8d8d8" stroke-width="1.4"/><path d="M1091 455.5Q1098 462 1105 455.5" fill="none" stroke="#d8d8d8" stroke-width="1.3"/></g>
 <!-- layer type icons -->
 <g fill="none" stroke="#ddd" stroke-width="1.1">
  <path d="M1140.5 388.5H1149.5V392L1147 397.5H1140.5Z"/>
  <path d="M1139.5 415.5H1148.5V423.5H1142.5M1140 416L1146 422"/>
  <path d="M1139.5 442.5H1148.5V450.5H1142.5M1140 443L1146 449"/>
 </g>
 <g fill="#ddd"><rect x="1139" y="387" width="3" height="3"/><rect x="1148" y="387" width="3" height="3"/><rect x="1139" y="396" width="3" height="3"/></g>
 <!-- locks -->
 <g fill="#7590ad"><path d="M1310 397H1320V404H1310Z"/><path d="M1318.5 397V394.5Q1318.5 392 1316.5 391.5" fill="none" stroke="#7590ad" stroke-width="1.3"/></g>
 <g fill="#666"><path d="M1310 424H1320V431H1310Z"/><path d="M1318.5 424V421.5Q1318.5 419 1316.5 418.5" fill="none" stroke="#666" stroke-width="1.3"/></g>
 <g fill="#ddd"><path d="M1310 451.5H1320V458.5H1310Z"/><path d="M1312 451.5V449Q1312 445.5 1315 445.5Q1318 445.5 1318 449V451.5" fill="none" stroke="#ddd" stroke-width="1.6"/></g>
 <g font-family="Liberation Sans" font-style="italic" font-size="18" stroke-width="0.5">
  <text transform="translate(1326.5 404) scale(1.3 1)" fill="#7a93ad" stroke="#7a93ad">α</text><text transform="translate(1326.5 431) scale(1.3 1)" fill="#6a6a6a" stroke="#6a6a6a">α</text><text transform="translate(1326.5 458) scale(1.3 1)" fill="#6a6a6a" stroke="#6a6a6a">α</text>
 </g>
 <g><rect x="1346" y="419" width="15" height="15" fill="#757575"/><rect x="1346" y="419" width="5" height="5" fill="#4f4f4f"/><rect x="1356" y="419" width="5" height="5" fill="#4f4f4f"/><rect x="1351" y="424" width="5" height="5" fill="#4f4f4f"/><rect x="1346" y="429" width="5" height="5" fill="#4f4f4f"/><rect x="1356" y="429" width="5" height="5" fill="#4f4f4f"/><rect x="1346" y="446" width="15" height="15" fill="#757575"/><rect x="1346" y="446" width="5" height="5" fill="#4f4f4f"/><rect x="1356" y="446" width="5" height="5" fill="#4f4f4f"/><rect x="1351" y="451" width="5" height="5" fill="#4f4f4f"/><rect x="1346" y="456" width="5" height="5" fill="#4f4f4f"/><rect x="1356" y="456" width="5" height="5" fill="#4f4f4f"/></g>
 <!-- bottom layer buttons -->
 <g fill="none" stroke="#ddd" stroke-width="1.5">
  <rect x="1090.75" y="488.75" width="13.5" height="13.5"/><path d="M1097.5 491.5V499.5M1093.5 495.5H1101.5"/>
  <path d="M1132.75 492V502.25H1143"/><rect x="1135.75" y="488.75" width="10.5" height="10.5"/>
  <path d="M1164 491.5L1170.5 498L1177 491.5"/>
  <path d="M1196 498L1202.5 491.5L1209 498"/>
  <path d="M1227 490H1243M1227 495.5H1243M1227 501H1243"/>
 </g>
 <g fill="#ddd"><rect x="1236" y="487.5" width="3" height="5"/><rect x="1231" y="493" width="3" height="5"/><rect x="1236" y="498.5" width="3" height="5"/></g>
 <path d="M1112.5 493.5H1118.5L1115.5 496.5Z" fill="#aaa"/>
 <path d="M1342.5 489.5H1356.5V491.5H1342.5Z M1347 487.5H1352V489.5H1347Z M1343.5 492.5H1355.5L1354.5 503H1344.5Z" fill="#ddd"/>
</svg>

<!-- TOOL OPTIONS -->
<div class="t d" style="left:1089px;top:520.5px">Tool <span class=u>O</span>ptions</div>
<!-- tabs -->
<div class="a" style="left:1090px;top:565px;width:257px;height:148px;box-sizing:border-box;border:1px solid #5a5a5a;border-bottom:none;border-right-color:#333;border-left-color:#555;border-top-color:#5a5a5a"></div>
<div class="taba" style="left:1090px;top:540px;width:44px;height:26px"></div>
<div class="a" style="left:1091px;top:565px;width:42px;height:1px;background:#474747"></div>
<div class="tab" style="left:1134px;top:542px;width:43px;height:23px"></div>
<div class="tab" style="left:1178px;top:542px;width:42px;height:23px"></div>
<div class="t d" style="left:1293px;top:552.5px">Geometry</div>
<!-- X/Y -->
<div class="t d" style="left:1100px;top:581.5px">X:</div>
<div class="t d" style="left:1100px;top:605.5px">Y:</div>
<div class="fld" style="left:1113px;top:577px;width:106px;height:20px"></div>
<div class="fld" style="left:1221px;top:577px;width:106px;height:20px"></div>
<div class="fld" style="left:1113px;top:601px;width:106px;height:20px"></div>
<div class="fld" style="left:1221px;top:601px;width:106px;height:20px"></div>
<div class="a" style="left:1205px;top:578px;width:1px;height:18px;background:#2c2c2c"></div>
<div class="a" style="left:1313px;top:578px;width:1px;height:18px;background:#2c2c2c"></div>
<div class="a" style="left:1205px;top:602px;width:1px;height:18px;background:#2c2c2c"></div>
<div class="a" style="left:1313px;top:602px;width:1px;height:18px;background:#2c2c2c"></div>
<div class="a" style="left:1205px;top:577px;width:14px;height:20px;box-sizing:border-box;border:1px solid #2e2e2e;border-radius:0 3px 3px 0;background:#3c3c3c"></div>
<div class="a" style="left:1313px;top:577px;width:14px;height:20px;box-sizing:border-box;border:1px solid #2e2e2e;border-radius:0 3px 3px 0;background:#3c3c3c"></div>
<div class="a" style="left:1205px;top:601px;width:14px;height:20px;box-sizing:border-box;border:1px solid #2e2e2e;border-radius:0 3px 3px 0;background:#3c3c3c"></div>
<div class="a" style="left:1313px;top:601px;width:14px;height:20px;box-sizing:border-box;border:1px solid #2e2e2e;border-radius:0 3px 3px 0;background:#3c3c3c"></div>
<div class="t d" style="left:1168px;top:582.5px;color:#7d7d7d">21 px</div>
<div class="t d" style="left:1275px;top:582.5px;color:#7d7d7d">26 px</div>
<div class="t d" style="left:1168px;top:606.5px;color:#7d7d7d">53 px</div>
<div class="t d" style="left:1275px;top:606.5px;color:#7d7d7d">60 px</div>
<div class="a" style="left:1100px;top:630px;width:237px;height:1px;background:#333;box-shadow:0 1px 0 #555"></div>
<div class="a" style="left:1100px;top:706px;width:237px;height:1px;background:#333;box-shadow:0 1px 0 #555"></div>
<!-- anchor grid -->
<div class="cb" style="left:1100px;top:639px;width:19px;height:19px"></div>
<div class="cb" style="left:1121px;top:639px;width:20px;height:19px"></div>
<div class="cb" style="left:1143px;top:639px;width:19px;height:19px"></div>
<div class="cb" style="left:1100px;top:660px;width:19px;height:20px"></div>
<div class="cb" style="left:1121px;top:660px;width:20px;height:20px"></div>
<div class="cb" style="left:1143px;top:660px;width:19px;height:20px"></div>
<div class="cb" style="left:1100px;top:681px;width:19px;height:19px"></div>
<div class="cb" style="left:1121px;top:681px;width:20px;height:19px"></div>
<div class="cb" style="left:1143px;top:681px;width:19px;height:19px"></div>
<!-- checkboxes -->
<div class="a" style="left:1183px;top:641px;width:14px;height:14px;background:#393939;border-radius:1px"></div>
<div class="a" style="left:1183px;top:662px;width:14px;height:14px;background:#393939;border-radius:1px"></div>
<div class="a" style="left:1183px;top:683px;width:14px;height:14px;background:#393939;border-radius:1px"></div>
<div class="t d" style="left:1202px;top:642.5px;color:#7a7a7a">Anchor Lock</div>
<div class="t d" style="left:1202px;top:663.5px">Scale Styles</div>
<div class="t d" style="left:1202px;top:684.5px"><span class=u>G</span>lobal Coordinates</div>
<!-- scrollbar -->
<div class="a" style="left:1353px;top:535px;width:13px;height:178px;background:#3b3b3b"></div>
<div class="a" style="left:1353px;top:535px;width:13px;height:13px;box-sizing:border-box;border:1px solid #575757;background:#3f3f3f"></div>
<div class="a" style="left:1353px;top:549px;width:13px;height:112px;box-sizing:border-box;border:1px solid #575757;background:#444"></div>
<div class="a" style="left:1353px;top:700px;width:13px;height:13px;box-sizing:border-box;border:1px solid #575757;background:#3f3f3f"></div>
<svg style="left:0;top:0" width="1366" height="743">
 <g fill="#e0e0e0"><rect x="1101" y="544" width="2" height="2"/><rect x="1101" y="548" width="2" height="2"/><rect x="1101" y="552" width="2" height="2"/><rect x="1101" y="556" width="2" height="3"/><rect x="1103" y="557" width="2" height="2"/><rect x="1107" y="557" width="2" height="2"/><rect x="1111" y="557" width="2" height="2"/><rect x="1115" y="557" width="2" height="2"/></g>
 <path d="M1146 559L1160 545" stroke="#ddd" stroke-width="1.6"/>
 <path d="M1189.8 552.2L1195.5 546.8L1201.5 552.5L1196.2 557.8Q1195.2 558.8 1194.2 557.8Z" fill="none" stroke="#ddd" stroke-width="1.4"/>
 <path d="M1190.5 552.5H1201L1196 557.5Q1195.2 558.3 1194.4 557.5Z" fill="#ddd"/>
 <path d="M1192.5 549.5V546Q1192.5 544.5 1194 544.5" fill="none" stroke="#ddd" stroke-width="1.2"/>
 <circle cx="1203" cy="557.5" r="1.3" fill="#ddd"/>
 <!-- spin arrows -->
 <g fill="#555"><path d="M1208 585L1212 581L1216 585Z M1208 589L1212 593L1216 589Z"/><path d="M1316 585L1320 581L1324 585Z M1316 589L1320 593L1324 589Z"/><path d="M1208 609L1212 605L1216 609Z M1208 613L1212 617L1216 613Z"/><path d="M1316 609L1320 605L1324 609Z M1316 613L1320 617L1324 613Z"/></g>
 <!-- chain -->
 <g fill="none" stroke="#000" stroke-width="3"><path d="M1330 597V590.5Q1330 588 1332.5 588Q1335 588 1335 590.5V597"/><path d="M1330 603V607.5Q1330 610 1332.5 610Q1335 610 1335 607.5V603"/></g>
 <g fill="none" stroke="#e8e8e8" stroke-width="1"><path d="M1330 597V590.5Q1330 588 1332.5 588Q1335 588 1335 590.5V597"/><path d="M1330 603V607.5Q1330 610 1332.5 610Q1335 610 1335 607.5V603"/><path d="M1332.5 592V598M1332.5 603V606"/></g>
 <!-- anchor arrows -->
 <g fill="none" stroke="#aaa" stroke-width="1.2">
  <path d="M1106 653V645H1114"/><path d="M1126.5 651L1131 646.5L1135.5 651"/><path d="M1148 645H1156V653"/>
  <path d="M1113 665.5L1108.5 670L1113 674.5"/><path d="M1150 665.5L1154.5 670L1150 674.5"/>
  <path d="M1106 686V694H1114"/><path d="M1126.5 689L1131 693.5L1135.5 689"/><path d="M1148 694H1156V686"/>
 </g>
 <path d="M1355 545H1364L1359.5 540.5Z" fill="#aaa"/>
 <path d="M1355 704H1364L1359.5 708.5Z" fill="#aaa"/>
</svg>

<!-- STATUS BAR -->
<div class="t" style="left:277px;top:722px">RGB/Alpha (8-bit integer/ch...)  sRGB-elle-V2-srgbtrc.icc</div>
<div class="a" style="left:859px;top:717px;width:140px;height:23px;box-sizing:border-box;border:1px solid #353535"></div>
<div class="t" style="left:864px;top:722px">108 <span class=u>x</span> 108 (128.0 KiB)</div>
<div class="t" style="left:1207px;top:722px">400%</div>
<div class="a" style="left:1258px;top:726px;width:82px;height:5px;border-radius:3px;background:#333"></div>
<div class="a" style="left:1258px;top:726px;width:37px;height:5px;box-sizing:border-box;border:1px solid #333;border-radius:3px 0 0 3px;background:#6d93bb"></div>
<div class="a" style="left:1293px;top:722px;width:12px;height:12px;box-sizing:border-box;border:1px solid #2e2e2e;border-radius:3px;background:#474747;box-shadow:inset 0 0 0 1px #5a5a5a"></div>
<div class="a" style="left:1342px;top:717px;width:22px;height:22px;box-sizing:border-box;border:1px solid #363636;border-radius:4px;background:#333;box-shadow:inset 0 0 0 1px #505050"></div>
<svg style="left:0;top:0" width="1366" height="743">
 <rect x="7.5" y="720.5" width="14" height="14" fill="none" stroke="#ddd" stroke-width="1.3"/>
 <circle cx="14.5" cy="727.5" r="4" fill="none" stroke="#ddd" stroke-width="1" stroke-dasharray="1 1.1"/>
 <path d="M1121 726A5 5 0 1 0 1124 723" fill="none" stroke="#bbb" stroke-width="1.2"/>
 <path d="M1119 722L1123 721L1121 725Z" fill="#bbb"/>
 <rect x="1120" y="726" width="6" height="6" fill="none" stroke="#bbb" stroke-width="1"/>
 <rect x="1347" y="720.5" width="12" height="14.5" fill="#f4f4f4"/>
 <circle cx="1353" cy="728" r="4.6" fill="#6da0e8" opacity="0.55"/>
 <circle cx="1353" cy="728" r="4.3" fill="none" stroke="#f0d020" stroke-width="1.6" stroke-dasharray="2 1.4"/>
 <circle cx="1353" cy="728" r="2" fill="#5a9ae8"/>
</svg>

</body></html>
